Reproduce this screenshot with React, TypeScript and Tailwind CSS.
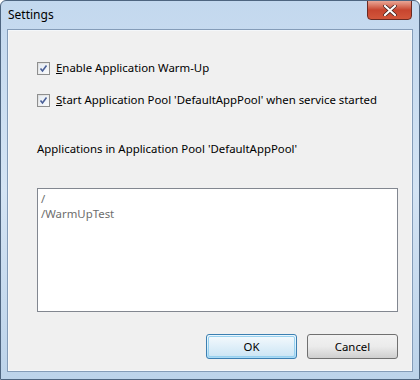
import React from "react";

function Check() {
  return (
    <div className="w-[13px] h-[13px] border border-[#8e8f8f] bg-gradient-to-br from-[#dcdcdc] to-[#fbfbfb] flex items-center justify-center shrink-0">
      <div className="w-[9px] h-[9px] bg-gradient-to-br from-[#e6ecf3] to-[#f7f9fb] flex items-center justify-center">
        <svg width="9" height="9" viewBox="0 0 9 9">
          <path d="M1.5 4.5 L3.5 7 L7.5 1.5" fill="none" stroke="#4a5f97" strokeWidth="1.6" />
        </svg>
      </div>
    </div>
  );
}

export default function App() {
  const font = { fontFamily: '"Noto Sans", "Open Sans", sans-serif' };
  return (
    <div
      className="w-[420px] h-[380px] relative overflow-hidden bg-gradient-to-b from-[#c3d8ee] via-[#d4e4f4] to-[#bcd3ea] border border-[#4e6580] rounded-t-[6px] flex flex-col"
      style={font}
    >
      <div className="h-[28px] flex items-center pl-[7px] shrink-0 relative">
        <span className="text-[12px] text-black">Settings</span>
        <div className="absolute right-[7px] top-[-1px] w-[45px] h-[20px] rounded-b-[4px] border border-[#6b2a22] bg-gradient-to-b from-[#e9a696] via-[#c7452f] to-[#d2563b] flex items-center justify-center">
          <svg width="14" height="11" viewBox="0 0 14 11">
            <path d="M2 1 L12 10 M12 1 L2 10" stroke="#3a2020" strokeWidth="3.6" strokeLinecap="round" />
            <path d="M2 1 L12 10 M12 1 L2 10" stroke="#ffffff" strokeWidth="2.2" strokeLinecap="round" />
          </svg>
        </div>
      </div>
      <div className="ml-[6px] mr-[6px] mb-[7px] flex-1 border border-[#849cb8] bg-[#f0f0f0] flex flex-col">
        <div className="flex-1 border border-[#f4f7fa] flex flex-col pl-[28px] pr-[13px] text-[11.4px] text-black">
          <div className="mt-[30px] flex items-center gap-[6px] h-[14px]">
            <Check />
            <span><span className="underline">E</span>nable Application Warm-Up</span>
          </div>
          <div className="mt-[18px] flex items-center gap-[6px] h-[14px]">
            <Check />
            <span><span className="underline">S</span>tart Application Pool 'DefaultAppPool' when service started</span>
          </div>
          <div className="mt-[34px] h-[16px] flex items-center">Applications in Application Pool 'DefaultAppPool'</div>
          <div className="mt-[31px] h-[124px] border border-[#828790] bg-white px-[3px] pt-[2px] text-[#6d6d6d] leading-[15px]">
            <div>/</div>
            <div>/WarmUpTest</div>
          </div>
          <div className="mt-[22px] flex justify-end gap-[10px]">
            <div className="w-[91px] h-[25px] rounded-[3px] border border-[#3c7fb1] bg-gradient-to-b from-[#eaf6fd] via-[#d9f0fc] to-[#a7d9f5] p-[1px]">
              <div className="w-full h-full rounded-[2px] border border-[#98d1ef] flex items-center justify-center bg-gradient-to-b from-[#f2f8fc] to-[#cde6f5]">OK</div>
            </div>
            <div className="w-[91px] h-[25px] rounded-[3px] border border-[#707070] bg-gradient-to-b from-[#f2f2f2] via-[#ebebeb] to-[#cfcfcf] flex items-center justify-center">
              Cancel
            </div>
          </div>
        </div>
      </div>
    </div>
  );
}
